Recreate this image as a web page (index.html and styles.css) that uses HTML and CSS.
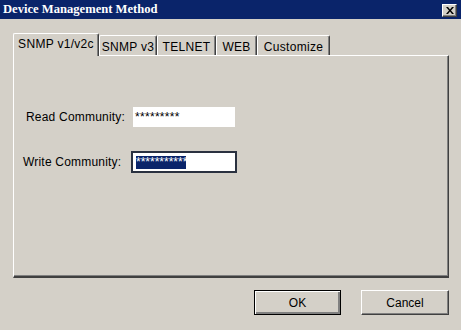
FILE: index.html
```html
<!DOCTYPE html>
<html lang="en">
<head>
    <meta charset="UTF-8">
    <meta name="viewport" content="width=device-width, initial-scale=1.0">
    <title>Device Management Method</title>
    <link rel="stylesheet" href="styles.css">
</head>
<body>

<div id="dialog">
    <div class="titlebar">
        <span class="title">Device Management Method</span>
        <button class="close-btn" title="Close">
            <svg width="8" height="7" viewBox="0 0 8 7">
                <path d="M0 0h2l2 2.5 2-2.5h2l-3 3.5 3 3.5h-2l-2-2.5-2 2.5h-2l3-3.5z" fill="#000"/>
            </svg>
        </button>
    </div>

    <div class="content">
        <div class="tabs">
            <div class="tab active tab-v1">SNMP v1/v2c</div>
            <div class="tab tab-v3">SNMP v3</div>
            <div class="tab tab-telnet">TELNET</div>
            <div class="tab tab-web">WEB</div>
            <div class="tab tab-custom">Customize</div>
        </div>

        <div class="panel">
            <div class="field read">
                <label>Read Community:</label>
                <div class="textbox">*********</div>
            </div>
            <div class="field write">
                <label>Write Community:</label>
                <div class="textbox focused"><span class="selected">***********</span></div>
            </div>
        </div>

        <div class="buttons">
            <button class="btn default">OK</button>
            <button class="btn">Cancel</button>
        </div>
    </div>
</div>

</body>
</html>
```

FILE: styles.css
```css
body {
    margin: 0;
    padding: 0;
    background-color: #d4d0c8;
    font-family: 'Liberation Sans', Arial, sans-serif;
    font-size: 12px;
    color: #000;
}

#dialog {
    width: 461px;
    height: 330px;
    background-color: #d4d0c8;
    overflow: hidden;
}

.titlebar {
    height: 19px;
    background-color: #0a246a;
    display: flex;
    align-items: center;
    justify-content: space-between;
    padding: 0 4px 0 3px;
}

.title {
    color: #fff;
    font-family: 'Liberation Serif', 'Times New Roman', serif;
    font-weight: bold;
    font-size: 12.6px;
}

.close-btn {
    width: 15px;
    height: 13px;
    padding: 0;
    margin-top: 1px;
    background-color: #d4d0c8;
    border: 1px solid;
    border-color: #fff #404040 #404040 #fff;
    box-shadow: inset -1px -1px 0 #808080;
    display: flex;
    align-items: center;
    justify-content: center;
}

.content {
    padding: 14px 12px 0 13px;
}

.tabs {
    display: flex;
    align-items: flex-end;
    height: 22px;
    position: relative;
    z-index: 1;
}

.tab {
    height: 20px;
    padding-top: 2px;
    display: flex;
    align-items: center;
    justify-content: center;
    box-sizing: border-box;
    border-top: 1px solid #fff;
    border-left: 1px solid #fff;
    border-right: 1px solid #404040;
    box-shadow: inset -1px 0 0 #808080;
    border-radius: 2px 2px 0 0;
    letter-spacing: 0.3px;
}

.tab.active {
    height: 23px;
    margin-bottom: -1px;
    padding: 0 0 2px 0;
    background-color: #d4d0c8;
}

.tab-v1 { width: 86px; }
.tab-v3 { width: 58px; }
.tab-telnet { width: 59px; }
.tab-web { width: 41px; }
.tab-custom { width: 73px; }

.panel {
    height: 223px;
    box-sizing: border-box;
    border-top: 1px solid #fff;
    border-left: 1px solid #fff;
    border-right: 1px solid #404040;
    border-bottom: 2px solid #404040;
    box-shadow: inset -1px -1px 0 #808080;
    padding-top: 51px;
}

.field {
    display: flex;
    align-items: center;
    letter-spacing: 0.2px;
}

.field label {
    width: 107px;
}

.field.read {
    padding-left: 12px;
    height: 20px;
}

.field.read .textbox {
    width: 102px;
    height: 20px;
}

.field.write {
    margin-top: 24px;
    padding-left: 9px;
    height: 22px;
}

.field.write label {
    width: 108px;
}

.textbox {
    background-color: #fff;
    box-sizing: border-box;
    padding: 0 2px;
    display: flex;
    align-items: center;
    line-height: 13px;
    letter-spacing: 0.3px;
}

.textbox.focused {
    width: 106px;
    height: 22px;
    border: 2px solid #2a3140;
    padding: 0 3px;
    letter-spacing: 0;
}

.selected {
    background-color: #0a246a;
    color: #fff;
    width: 50px;
    overflow: hidden;
    white-space: nowrap;
}

.buttons {
    display: flex;
    justify-content: flex-end;
    gap: 20px;
    margin-top: 12px;
}

.btn {
    width: 88px;
    height: 25px;
    background-color: #d4d0c8;
    font-family: 'Liberation Sans', Arial, sans-serif;
    font-size: 12px;
    color: #000;
    border: 1px solid;
    border-color: #fff #404040 #404040 #fff;
    box-shadow: inset -1px -1px 0 #808080;
    padding: 0;
}

.btn.default {
    width: 87px;
    border: 1px solid #000;
    box-shadow: inset 1px 1px 0 #fff, inset -2px -2px 0 #808080;
}
```
